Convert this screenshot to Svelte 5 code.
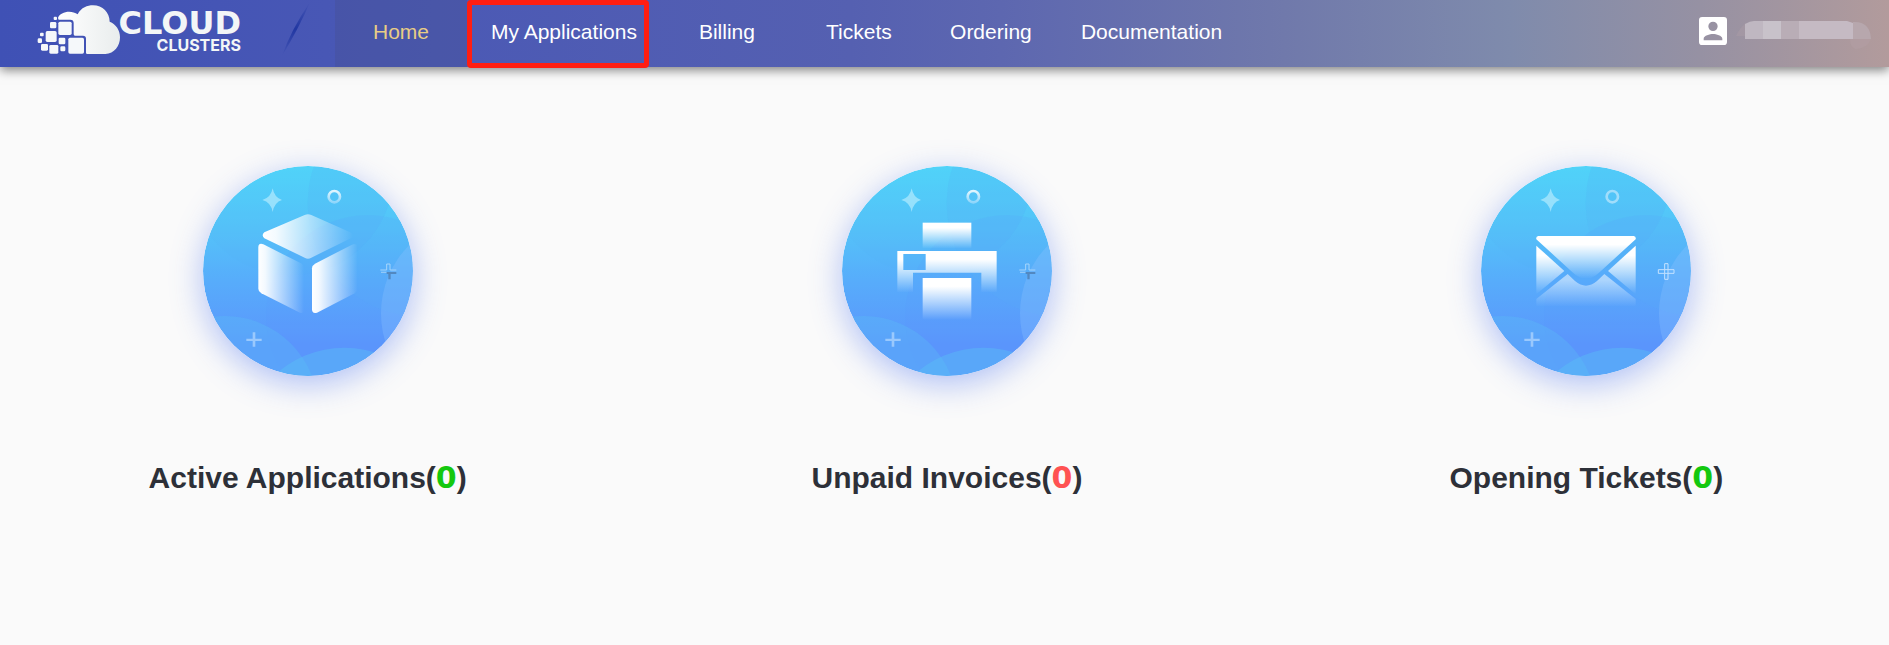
<script>
  const links = ['Home', 'My Applications', 'Billing', 'Tickets', 'Ordering', 'Documentation'];
  const active = 'Home';
  const highlighted = 'My Applications';

  let cards = [
    { icon: 'cube', title: 'Active Applications', count: 0, alert: false },
    { icon: 'printer', title: 'Unpaid Invoices', count: 0, alert: true },
    { icon: 'mail', title: 'Opening Tickets', count: 0, alert: false }
  ];
</script>

<header class="topbar">
  <a class="brand" href="#home" aria-label="Cloud Clusters">
    <svg class="cloud" viewBox="108 12 255 153" aria-hidden="true">
      <defs>
        <linearGradient id="cloud-fill" x1="0" x2="1" y1="0" y2="0">
          <stop offset="0" stop-color="#fff" />
          <stop offset="1" stop-color="#e9eded" />
        </linearGradient>
      </defs>
      <path
        fill="url(#cloud-fill)"
        d="M174 54C180 35 214 29 233 43C244 22 262 16 279 16C308 16 329 38 329 65C348 72 360 91 360 112C360 138 343 161 316 162H262Q258 162 258 158V116Q258 107 249 107H225Q221 107 221 102V69Q221 59 211 59H176Z"
      />
      <g fill="#f5f8fa">
        <rect x="175" y="65" width="40" height="40" rx="5" />
        <rect x="205" y="113" width="47" height="48" rx="5" />
        <rect x="137" y="93" width="33" height="33" rx="5" />
        <rect x="150" y="66" width="19" height="19" rx="4" />
        <rect x="176" y="113" width="20" height="20" rx="4" />
        <rect x="148" y="135" width="27" height="26" rx="4" />
        <rect x="123" y="132" width="21" height="20" rx="4" />
        <rect x="181" y="139" width="15" height="15" rx="4" />
        <rect x="113" y="115" width="13" height="14" rx="4" />
        <rect x="120" y="98" width="11" height="11" rx="3" />
        <rect x="161" y="50" width="10" height="10" rx="3" />
      </g>
    </svg>
    <span class="wordmark">
      <span class="word-big">CLOUD</span>
      <span class="word-small">CLUSTERS</span>
    </span>
  </a>

  <svg class="slash" viewBox="0 0 30 56" aria-hidden="true">
    <defs>
      <linearGradient id="slash-fill" x1="0" x2="0" y1="0" y2="1">
        <stop offset="0" stop-color="#1d34a0" stop-opacity="0" />
        <stop offset=".5" stop-color="#1d34a0" stop-opacity=".9" />
        <stop offset="1" stop-color="#1d34a0" stop-opacity="0" />
      </linearGradient>
    </defs>
    <path fill="url(#slash-fill)" d="M29 1Q19 25 1 55Q10 29 29 1Z" />
  </svg>

  <nav>
    {#each links as link}
      <a
        href="#{link.toLowerCase().replace(' ', '-')}"
        class:active={link === active}
        class:highlighted={link === highlighted}>{link}</a
      >
    {/each}
  </nav>

  <button class="account" aria-label="Account">
    <svg class="avatar" viewBox="3 3 18 18" aria-hidden="true">
      <path
        fill="#fff"
        fill-rule="evenodd"
        d="M5 3H19A2 2 0 0 1 21 5V19A2 2 0 0 1 19 21H5A2 2 0 0 1 3 19V5A2 2 0 0 1 5 3ZM12 6A3 3 0 1 0 12 12A3 3 0 1 0 12 6ZM6 17V18H18V17C18 15 14 14 12 14S6 15 6 17Z"
      />
    </svg>
    <svg class="masked-name" viewBox="0 0 136 32" aria-hidden="true">
      <path fill="#a99ca5" opacity=".5" d="M0 19Q4 10 10 6V19Z" />
      <path fill="#bfb7c1" d="M9 7Q14 4 18 4H27V22H9Z" />
      <rect x="27" y="4" width="18" height="18" fill="#c8c2ca" />
      <rect x="45" y="4" width="18" height="18" fill="#b9adb6" />
      <path fill="#c5bac3" d="M63 4H111L117 6V22H63Z" />
      <path fill="#b7a7ad" d="M117 5Q134 4 135 22H117Z" />
      <path fill="#b39fa4" opacity=".6" d="M114 22H135Q132 31 120 32Q114 30 114 22Z" />
    </svg>
  </button>
</header>

<main>
  {#each cards as card}
    <a class="card" href="#{card.icon}">
      <svg class="badge" viewBox="66 78 630 630" aria-hidden="true">
        <defs>
          <linearGradient id="{card.icon}-bg" x1="0" x2="0" y1="0" y2="1">
            <stop offset="0" stop-color="#50d9fa" />
            <stop offset=".3" stop-color="#54c3f9" />
            <stop offset=".55" stop-color="#57acfb" />
            <stop offset=".85" stop-color="#5b96fc" />
            <stop offset="1" stop-color="#5a96fc" />
          </linearGradient>
          <linearGradient id="{card.icon}-right" x1="0" x2="1" y1="0" y2="0">
            <stop offset="0" stop-color="#fff" />
            <stop offset=".15" stop-color="#fff" stop-opacity=".93" />
            <stop offset="1" stop-color="#fff" stop-opacity="0" />
          </linearGradient>
          <linearGradient id="{card.icon}-down" x1="0" x2="0" y1="0" y2="1">
            <stop offset="0" stop-color="#fff" />
            <stop offset=".2" stop-color="#fff" />
            <stop offset="1" stop-color="#fff" stop-opacity="0" />
          </linearGradient>
          <linearGradient id="{card.icon}-ring" x1="0" x2="0" y1="0" y2="1">
            <stop offset="0" stop-color={card.icon === 'mail' ? '#a0ddfb' : '#e2f6fe'} />
            <stop offset="1" stop-color={card.icon === 'mail' ? '#a0ddfb' : '#8fd6fb'} />
          </linearGradient>
          <clipPath id="{card.icon}-disc"><circle cx="381" cy="393" r="315" /></clipPath>
          <clipPath id="{card.icon}-upper"><circle cx="330" cy="98" r="308" /></clipPath>
        </defs>

        <g clip-path="url(#{card.icon}-disc)">
          <rect x="66" y="78" width="630" height="630" fill="url(#{card.icon}-bg)" />
          <circle cx="330" cy="98" r="308" fill="#56b4f8" opacity=".14" />
          <circle cx="720" cy="190" r="340" fill="#55bdf8" opacity=".1" />
          <circle cx="720" cy="190" r="340" fill="#55aff8" opacity=".14" clip-path="url(#{card.icon}-upper)" />
          <circle cx="560" cy="530" r="305" fill="#5a93fb" opacity=".12" />
          <circle cx="130" cy="810" r="282" fill="#59c4f5" opacity=".28" />
          <circle cx="490" cy="930" r="307" fill="#59c4f5" opacity=".38" />
          <circle cx="890" cy="520" r="290" fill="#8fc4ff" opacity=".3" />
        </g>

        <path fill="#b5ebfd" opacity=".7" d="M275 145Q280 173 303 180Q280 187 275 216Q270 187 244 180Q270 173 275 145Z" />
        <circle cx="460" cy="170" r="17" fill="none" stroke="url(#{card.icon}-ring)" stroke-width="8" />
        <path fill="#cfe8ff" opacity=".55" d="M215 577H223V596H242V603H223V620H215V603H196V596H215Z" />
        {#if card.icon === 'mail'}
          <path
            fill="none"
            stroke="#c5e2ff"
            stroke-width="3"
            d="M617 371H627V389H645V400H627V418H617V400H598V389H617ZM617 389H627V400H617Z"
          />
        {:else}
          <path fill="none" stroke="#a5d5fb" stroke-width="3" d="M598 390H617V372H627V390H646" />
          <path fill="#a5d2f9" d="M600 395H617V398H600Z" />
          <path fill="#5288c0" d="M617 396H646V402H629V418H622V402H617Z" />
        {/if}

        {#if card.icon === 'cube'}
          <path
            fill="url(#cube-right)"
            d="M371 225Q381 220 391 225L511 278Q522 285 511 294L391 353Q381 359 371 353L250 295Q240 286 250 277Z"
          />
          <path fill="url(#cube-right)" d="M232 321Q233 308 247 313L360 370Q369 375 369 385V510Q369 522 357 518L241 460Q232 455 232 446Z" />
          <path fill="url(#cube-right)" d="M393 385Q393 376 402 371L513 314Q528 308 530 321V446Q530 455 521 460L408 518Q393 522 393 508Z" />
        {:else if card.icon === 'printer'}
          <rect x="308" y="248" width="146" height="78" fill="url(#printer-down)" />
          <path
            fill="url(#printer-down)"
            fill-rule="evenodd"
            d="M232 333H530V458H484V398H279V458H232ZM250 342V390H317V342Z"
          />
          <rect x="308" y="414" width="146" height="126" fill="url(#printer-down)" />
        {:else}
          <path
            fill="url(#mail-down)"
            d="M238 288H524Q532 290 530 298L420 398Q381 434 342 398L232 298Q230 290 238 288Z"
          />
          <path fill="url(#mail-down)" d="M232 317L316 393L232 463Z" />
          <path fill="url(#mail-down)" d="M530 317L447 393L530 463Z" />
          <path
            fill="url(#mail-down)"
            opacity=".5"
            d="M232 477L326 402L348 423Q381 451 414 423L436 402L530 477V500H232Z"
          />
        {/if}
      </svg>
      <h2>{card.title}(<span class="count" class:alert={card.alert}>{card.count}</span>)</h2>
    </a>
  {/each}
</main>

<style>
  :global(body) {
    margin: 0;
    background: #fafafa;
    font-family: 'Liberation Sans', Arial, sans-serif;
    overflow-x: hidden;
  }

  .topbar {
    position: relative;
    display: flex;
    height: 67px;
    background: linear-gradient(
      90deg,
      #3f51b5 0%,
      #4b59b5 23%,
      #5560b1 45%,
      #5d67b0 53%,
      #7079ab 68%,
      #7f8bac 80%,
      #9691a3 90%,
      #b29b9c 100%
    );
    box-shadow: 0 3px 10px rgba(0, 0, 0, 0.5);
  }

  .brand {
    display: flex;
    align-items: flex-start;
    padding: 4px 0 0 36px;
    color: #f3f6f7;
    text-decoration: none;
  }

  .cloud {
    width: 85px;
    height: 51px;
  }

  .wordmark {
    display: flex;
    flex-direction: column;
    align-items: flex-end;
    width: 124px;
    margin: 2px 0 0 -4px;
    font-weight: 700;
  }

  .word-big {
    font-family: 'DejaVu Sans', sans-serif;
    font-size: 32px;
    line-height: 34px;
  }

  .word-small {
    font-family: Inter, sans-serif;
    font-size: 16px;
    line-height: 10px;
  }

  .slash {
    width: 30px;
    height: 56px;
    margin: 1px 24px 0 40px;
  }

  nav {
    display: flex;
  }

  nav a {
    position: relative;
    box-sizing: border-box;
    min-width: 132px;
    height: 67px;
    padding: 0 24px;
    color: #fff;
    font-size: 21px;
    line-height: 64px;
    text-align: center;
    text-decoration: none;
    white-space: nowrap;
  }

  nav a.active {
    color: #e8cd85;
    background: rgba(70, 80, 140, 0.3);
  }

  nav a.highlighted::after {
    content: '';
    position: absolute;
    inset: 0 12px -1px 0;
    border: 5px solid #ff1e12;
    border-radius: 4px;
  }

  .account {
    display: flex;
    align-items: flex-start;
    gap: 9px;
    margin-left: auto;
    padding: 17px 17px 0 0;
    border: 0;
    background: none;
    cursor: pointer;
  }

  .avatar {
    width: 28px;
    height: 28px;
  }

  .masked-name {
    width: 136px;
    height: 32px;
  }

  main {
    display: grid;
    grid-template-columns: repeat(3, 1fr);
    margin: 0 -17px 0 -12px;
    padding-top: 99px;
  }

  .card {
    display: flex;
    flex-direction: column;
    align-items: center;
    color: #2d3038;
    text-decoration: none;
  }

  .badge {
    width: 210px;
    height: 210px;
    border-radius: 50%;
    box-shadow: 0 8px 32px rgba(82, 120, 240, 0.45);
  }

  h2 {
    margin: 84px 0 0;
    font-size: 30px;
    line-height: 36px;
    font-weight: 700;
  }

  .count {
    color: #14c80f;
    font-family: 'DejaVu Sans', sans-serif;
    line-height: 1;
  }

  .count.alert {
    color: #ff5252;
  }
</style>
